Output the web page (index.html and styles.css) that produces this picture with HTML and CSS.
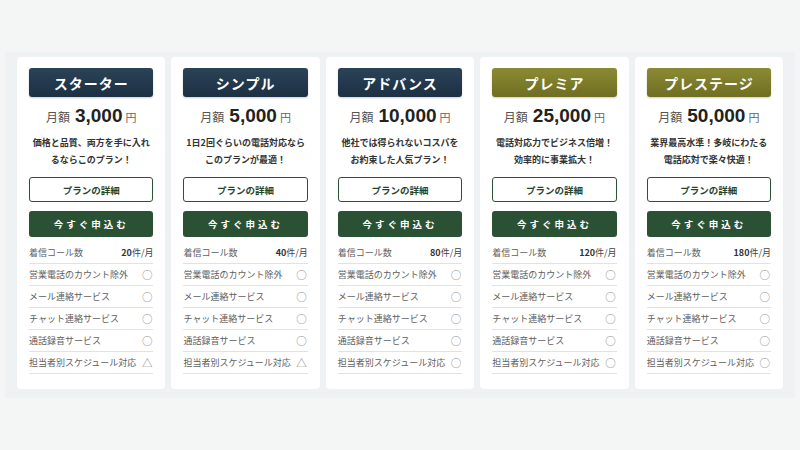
FILE: index.html
```html
<!DOCTYPE html>
<html lang="ja">
<head>
    <meta charset="UTF-8">
    <meta name="viewport" content="width=device-width, initial-scale=1.0">
    <title>料金プラン</title>
    <link rel="stylesheet" href="styles.css">
</head>
<body>
<div class="plans">
    <div class="card">
        <div class="plan-name navy">スターター</div>
        <div class="price"><span class="unit">月額</span><span class="amount">3,000</span><span class="yen">円</span></div>
        <p class="desc">価格と品質、両方を手に入れ<br>るならこのプラン！</p>
        <a class="btn-detail">プランの詳細</a>
        <a class="btn-apply">今すぐ申込む</a>
        <ul class="features">
            <li><span>着信コール数</span><span class="count">20<small>件/月</small></span></li>
            <li><span>営業電話のカウント除外</span><span class="mark">○</span></li>
            <li><span>メール連絡サービス</span><span class="mark">○</span></li>
            <li><span>チャット連絡サービス</span><span class="mark">○</span></li>
            <li><span>通話録音サービス</span><span class="mark">○</span></li>
            <li><span>担当者別スケジュール対応</span><span class="mark">△</span></li>
        </ul>
    </div>
    <div class="card">
        <div class="plan-name navy">シンプル</div>
        <div class="price"><span class="unit">月額</span><span class="amount">5,000</span><span class="yen">円</span></div>
        <p class="desc">1日2回ぐらいの電話対応なら<br>このプランが最適！</p>
        <a class="btn-detail">プランの詳細</a>
        <a class="btn-apply">今すぐ申込む</a>
        <ul class="features">
            <li><span>着信コール数</span><span class="count">40<small>件/月</small></span></li>
            <li><span>営業電話のカウント除外</span><span class="mark">○</span></li>
            <li><span>メール連絡サービス</span><span class="mark">○</span></li>
            <li><span>チャット連絡サービス</span><span class="mark">○</span></li>
            <li><span>通話録音サービス</span><span class="mark">○</span></li>
            <li><span>担当者別スケジュール対応</span><span class="mark">△</span></li>
        </ul>
    </div>
    <div class="card">
        <div class="plan-name navy">アドバンス</div>
        <div class="price"><span class="unit">月額</span><span class="amount">10,000</span><span class="yen">円</span></div>
        <p class="desc">他社では得られないコスパを<br>お約束した人気プラン！</p>
        <a class="btn-detail">プランの詳細</a>
        <a class="btn-apply">今すぐ申込む</a>
        <ul class="features">
            <li><span>着信コール数</span><span class="count">80<small>件/月</small></span></li>
            <li><span>営業電話のカウント除外</span><span class="mark">○</span></li>
            <li><span>メール連絡サービス</span><span class="mark">○</span></li>
            <li><span>チャット連絡サービス</span><span class="mark">○</span></li>
            <li><span>通話録音サービス</span><span class="mark">○</span></li>
            <li><span>担当者別スケジュール対応</span><span class="mark">○</span></li>
        </ul>
    </div>
    <div class="card">
        <div class="plan-name olive">プレミア</div>
        <div class="price"><span class="unit">月額</span><span class="amount">25,000</span><span class="yen">円</span></div>
        <p class="desc">電話対応力でビジネス倍増！<br>効率的に事業拡大！</p>
        <a class="btn-detail">プランの詳細</a>
        <a class="btn-apply">今すぐ申込む</a>
        <ul class="features">
            <li><span>着信コール数</span><span class="count">120<small>件/月</small></span></li>
            <li><span>営業電話のカウント除外</span><span class="mark">○</span></li>
            <li><span>メール連絡サービス</span><span class="mark">○</span></li>
            <li><span>チャット連絡サービス</span><span class="mark">○</span></li>
            <li><span>通話録音サービス</span><span class="mark">○</span></li>
            <li><span>担当者別スケジュール対応</span><span class="mark">○</span></li>
        </ul>
    </div>
    <div class="card">
        <div class="plan-name olive">プレステージ</div>
        <div class="price"><span class="unit">月額</span><span class="amount">50,000</span><span class="yen">円</span></div>
        <p class="desc">業界最高水準！多岐にわたる<br>電話応対で楽々快適！</p>
        <a class="btn-detail">プランの詳細</a>
        <a class="btn-apply">今すぐ申込む</a>
        <ul class="features">
            <li><span>着信コール数</span><span class="count">180<small>件/月</small></span></li>
            <li><span>営業電話のカウント除外</span><span class="mark">○</span></li>
            <li><span>メール連絡サービス</span><span class="mark">○</span></li>
            <li><span>チャット連絡サービス</span><span class="mark">○</span></li>
            <li><span>通話録音サービス</span><span class="mark">○</span></li>
            <li><span>担当者別スケジュール対応</span><span class="mark">○</span></li>
        </ul>
    </div>
</div>
</body>
</html>
```

FILE: styles.css
```css
body {
    margin: 0;
    background-color: #f4f6f6;
    font-family: "Noto Sans CJK JP", "Noto Sans", sans-serif;
    color: #333;
    padding: 52px 5px 0;
}

.plans {
    display: flex;
    align-items: flex-start;
    gap: 6px;
    background-color: #eff2f2;
    padding: 5px 12px 9px;
}

.card {
    flex: 1;
    background-color: #fff;
    border-radius: 4px;
    padding: 11px 12px 15px;
}

.plan-name {
    height: 29px;
    border-radius: 3px;
    color: #fff;
    font-size: 14px;
    font-weight: bold;
    letter-spacing: 1px;
    display: flex;
    align-items: center;
    justify-content: center;
    box-shadow: 0 1px 2px rgba(0, 0, 0, 0.2);
}

.navy {
    background: linear-gradient(#2b4257, #1d3044);
}

.olive {
    background: linear-gradient(#8b8a33, #6f6e22);
}

.price {
    display: flex;
    align-items: baseline;
    justify-content: center;
    margin-top: 8px;
    height: 25px;
}

.unit {
    font-size: 12px;
    color: #555;
    margin-right: 5px;
}

.amount {
    font-family: "Liberation Sans", Arial, sans-serif;
    font-size: 19px;
    font-weight: bold;
    color: #222;
    margin-right: 3px;
}

.yen {
    font-size: 11px;
    color: #666;
}

.desc {
    margin: 4px 0 0;
    font-size: 9px;
    font-weight: bold;
    line-height: 17px;
    text-align: center;
    white-space: nowrap;
    color: #333;
}

.btn-detail,
.btn-apply {
    display: flex;
    align-items: center;
    justify-content: center;
    box-sizing: border-box;
    border-radius: 3px;
    font-size: 9.5px;
    font-weight: bold;
}

.btn-detail {
    margin-top: 9px;
    height: 25px;
    border: 1.5px solid #2b5234;
    color: #24452c;
}

.btn-apply {
    margin-top: 9px;
    height: 26px;
    background-color: #2a5133;
    color: #fff;
    letter-spacing: 3px;
}

.features {
    list-style: none;
    margin: 5px 0 0;
    padding: 0;
}

.features li {
    display: flex;
    justify-content: space-between;
    align-items: center;
    height: 21px;
    border-bottom: 1px solid #e2e2e2;
    font-size: 9px;
    color: #606060;
}

.count {
    font-weight: bold;
    color: #333;
}

.count small {
    font-size: 9px;
    font-weight: normal;
    color: #444;
}

.mark {
    color: #888;
    font-size: 10.5px;
    padding-right: 1px;
}
```
